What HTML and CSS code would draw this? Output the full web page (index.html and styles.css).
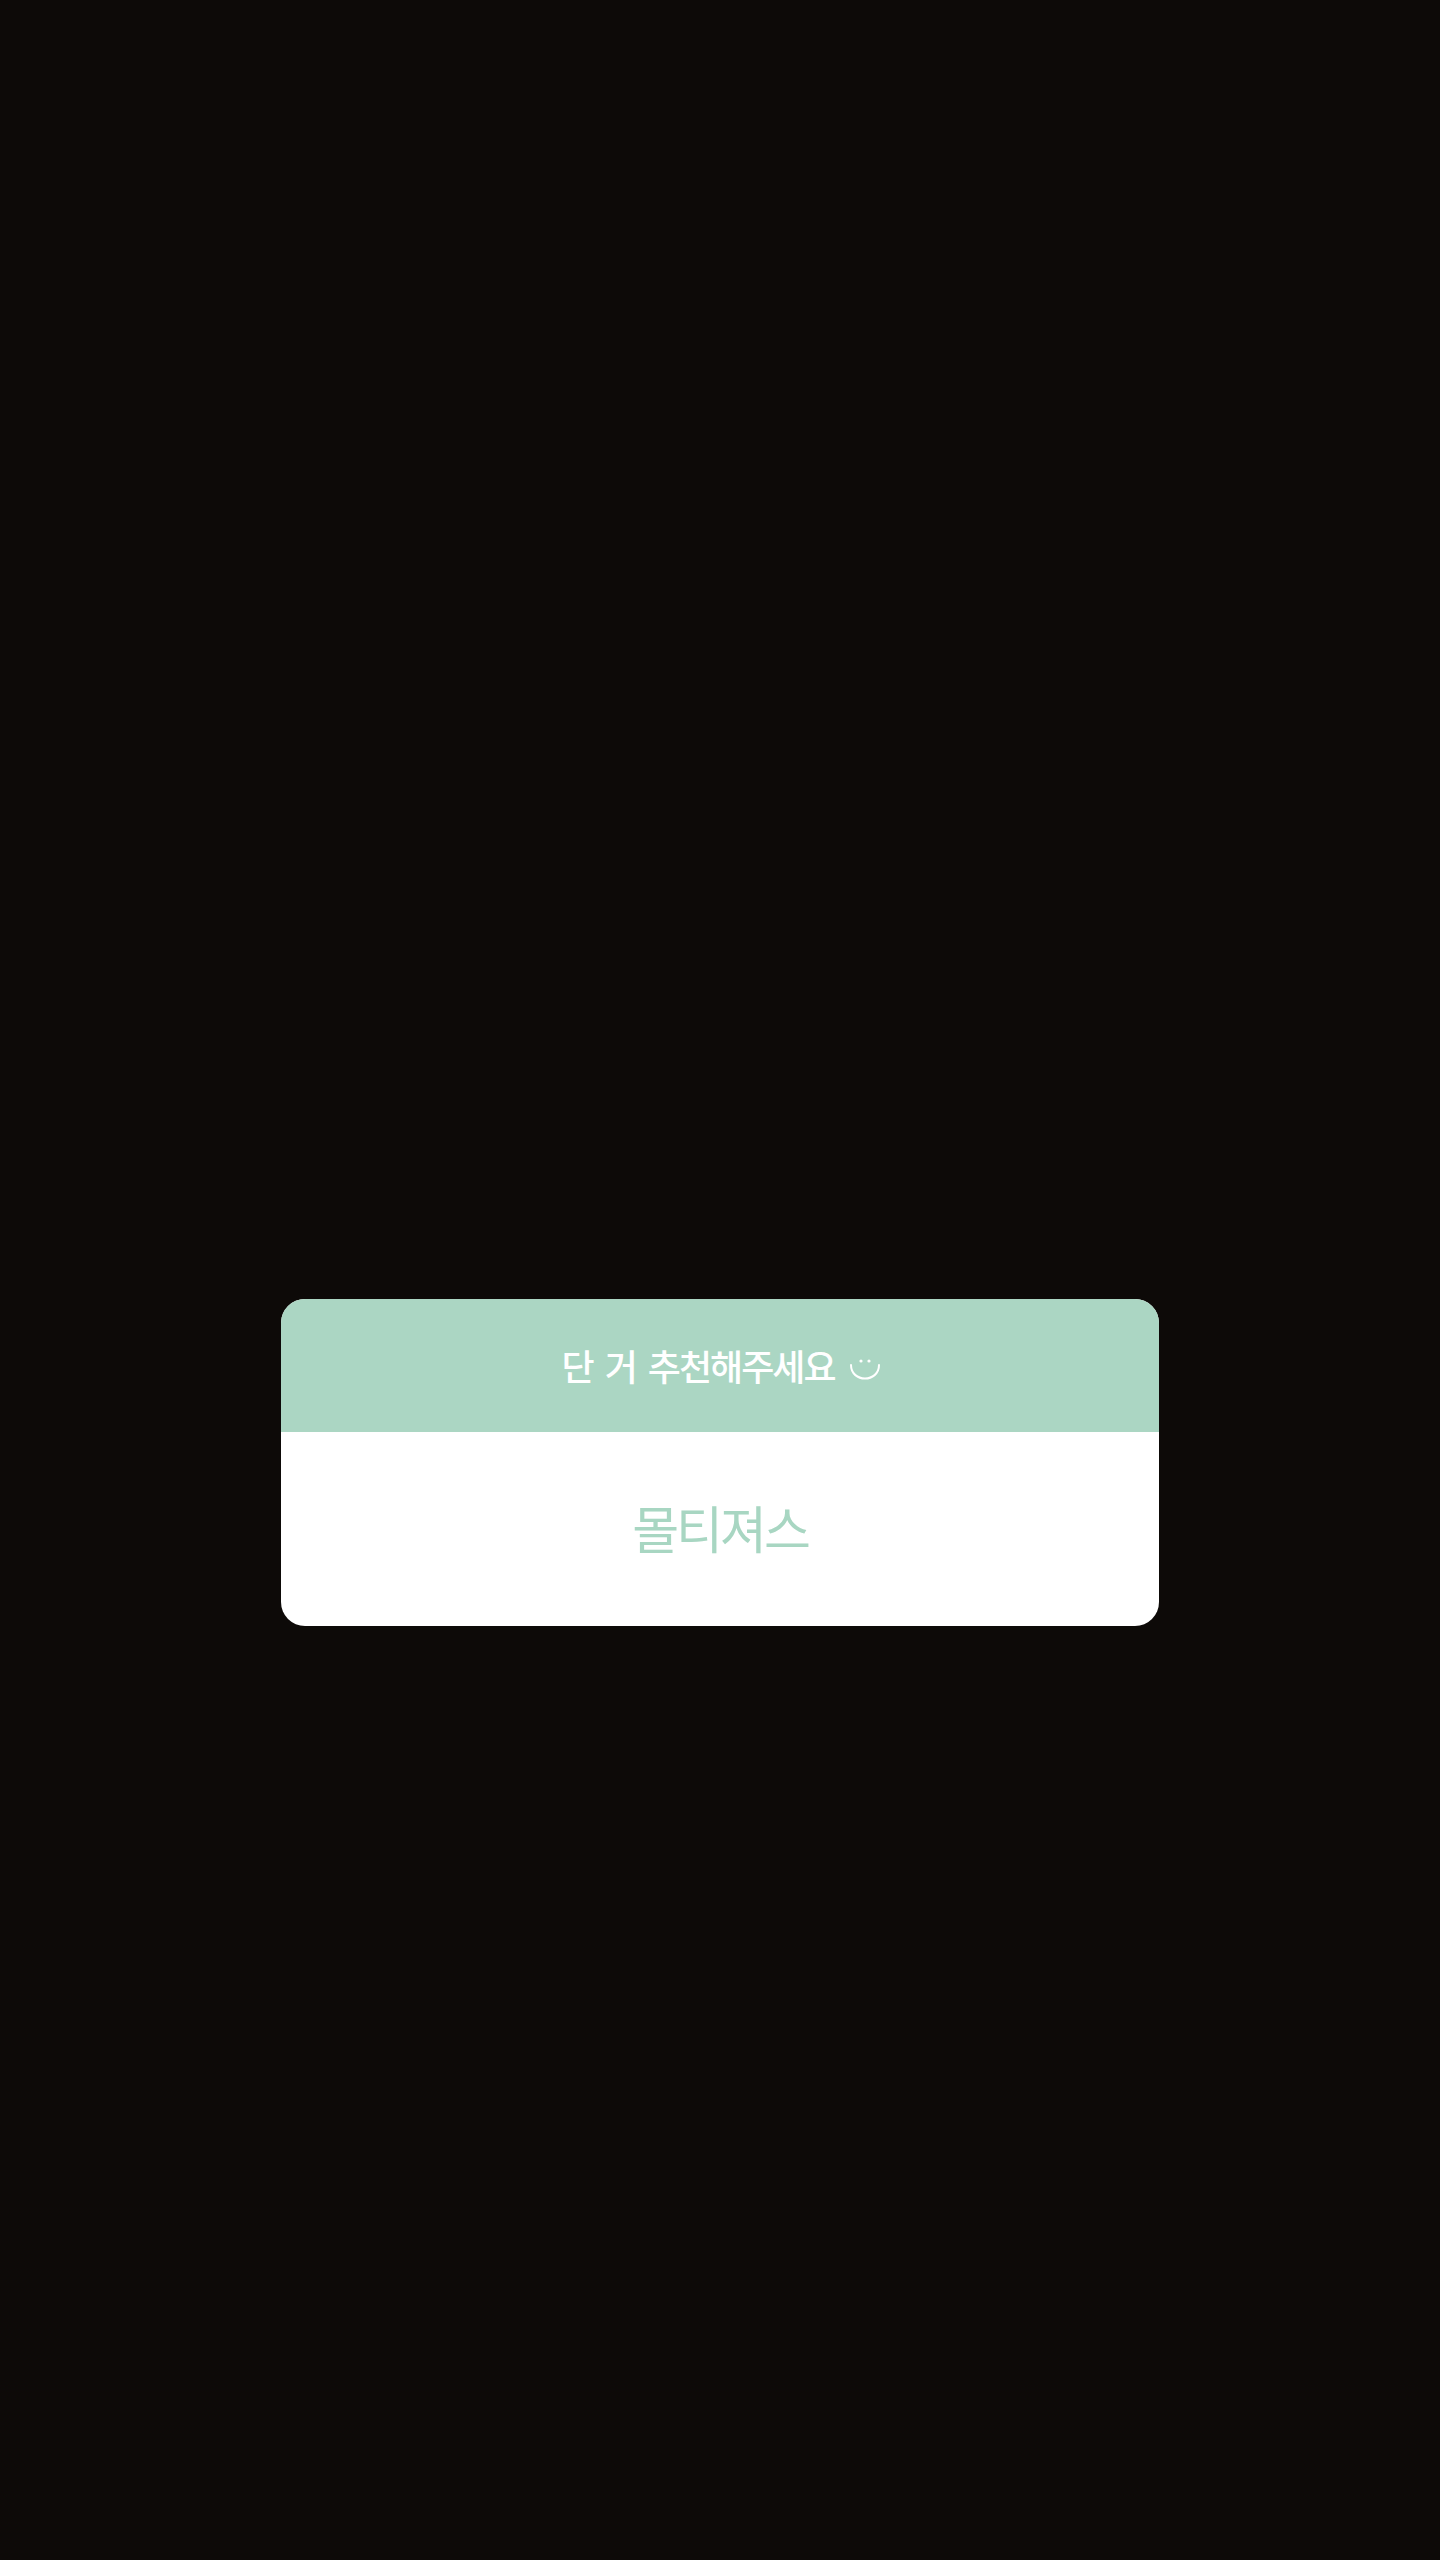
FILE: index.html
```html
<!DOCTYPE html>
<html lang="ko">
<head>
<meta charset="utf-8">
<title>질문 스티커</title>
<link rel="stylesheet" href="styles.css">
</head>
<body>
<main class="story">
  <section class="question-card">
    <header class="question-head">
      <span class="question-text">단 거 추천해주세요</span>
      <svg class="smiley" width="32" height="24" viewBox="0 0 32 24" aria-hidden="true">
        <circle cx="12" cy="3" r="1.6" fill="#ffffff"/>
        <circle cx="20" cy="3" r="1.6" fill="#ffffff"/>
        <path d="M2 7 C2 25 30 25 30 7" fill="none" stroke="#ffffff" stroke-width="2" stroke-linecap="round"/>
      </svg>
    </header>
    <div class="answer">
      <span class="answer-text">몰티져스</span>
    </div>
  </section>
</main>
</body>
</html>
```

FILE: styles.css
```css
html, body {
  margin: 0;
  padding: 0;
}

body {
  background: #0d0a08;
  font-family: "Noto Sans CJK KR", "Noto Sans", sans-serif;
}

.story {
  width: 1440px;
  height: 2560px;
  background: #0d0a08;
  display: flex;
  flex-direction: column;
  align-items: center;
  padding-top: 1299px;
  box-sizing: border-box;
}

.question-card {
  width: 878px;
  border-radius: 24px;
  overflow: hidden;
  background: #ffffff;
  display: flex;
  flex-direction: column;
}

.question-head {
  height: 133px;
  background: #abd6c3;
  display: flex;
  align-items: center;
  justify-content: center;
  padding-left: 2px;
}

.question-text {
  color: #ffffff;
  font-size: 36px;
  font-weight: 500;
  letter-spacing: -2px;
  word-spacing: 4px;
  line-height: 1;
  position: relative;
  top: -1px;
}

.smiley {
  margin-left: 14px;
  position: relative;
  top: 4px;
}

.answer {
  height: 194px;
  display: flex;
  align-items: center;
  justify-content: center;
}

.answer-text {
  color: #a8d6c2;
  font-size: 51px;
  font-weight: 400;
  letter-spacing: -3px;
  line-height: 1;
  position: relative;
  top: -2px;
}
```
